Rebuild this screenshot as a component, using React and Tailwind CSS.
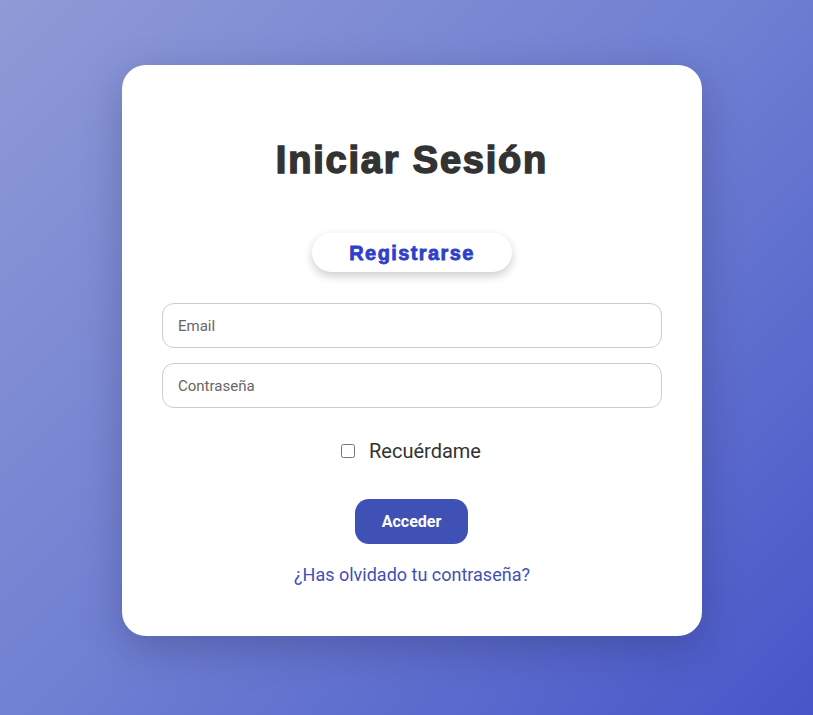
export default function App() {
  return (
    <div className="min-h-screen w-full flex items-center justify-center bg-[linear-gradient(135deg,#8f9ad6_0%,#6f7fd2_50%,#4656c8_100%)] font-['Roboto',sans-serif]">
      <div className="ml-[11px] mb-[14px] w-[580px] bg-white rounded-[24px] shadow-[0_12px_40px_rgba(20,20,60,0.25)] px-10 pt-[72px] pb-[49px] flex flex-col items-center">
        <h1 className="text-[38px] leading-[46px] font-bold text-[#333] font-['Liberation_Sans',sans-serif] tracking-[1.8px] [-webkit-text-stroke:1.5px_#333]">
          Iniciar Sesión
        </h1>

        <button
          type="button"
          className="mt-[50px] w-[200px] h-[39px] rounded-full bg-white shadow-[0_4px_10px_rgba(0,0,0,0.2)] text-[#2f40c6] text-[20px] font-bold font-['Liberation_Sans',sans-serif] tracking-[1.4px] [-webkit-text-stroke:0.8px_#2f40c6]"
        >
          Registrarse
        </button>

        <form className="w-full mt-[31px] flex flex-col items-center" onSubmit={(e) => e.preventDefault()}>
          <input
            type="email"
            placeholder="Email"
            className="w-full h-[45px] pl-[15px] pr-4 text-[15px] rounded-[12px] border border-[#ccc] outline-none placeholder:text-[#666] text-[#333]"
          />
          <input
            type="password"
            placeholder="Contraseña"
            className="w-full h-[45px] mt-[15px] pl-[15px] pr-4 text-[15px] rounded-[12px] border border-[#ccc] outline-none placeholder:text-[#666] text-[#333]"
          />

          <label className="mt-[31px] h-6 flex items-center gap-[14px] text-[20px] text-[#333] mr-[2px]">
            <input type="checkbox" className="w-[14px] h-[14px]" />
            Recuérdame
          </label>

          <button
            type="submit"
            className="mt-9 mr-[1px] w-[113px] h-[45px] rounded-[14px] bg-[#3f51b5] text-white text-[16px] font-bold"
          >
            Acceder
          </button>

          <a href="#" className="mt-[19px] text-[18px] leading-6 text-[#3f51b5]">
            ¿Has olvidado tu contraseña?
          </a>
        </form>
      </div>
    </div>
  );
}
